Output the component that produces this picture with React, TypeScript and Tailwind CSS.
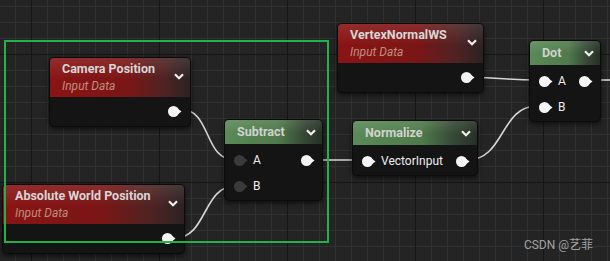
import React from "react";

type PinRow = { input?: string; dark?: boolean; output?: boolean };

const Pin = ({ dark = false }: { dark?: boolean }) => (
  <svg width="14" height="11" viewBox="0 0 14 11" className="shrink-0">
    <circle cx="5.5" cy="5.5" r="5.5" fill={dark ? "#3a3a3a" : "#f4f4f4"} />
    <polygon points="10,2.8 13.5,5.5 10,8.2" fill={dark ? "#3a3a3a" : "#f4f4f4"} />
  </svg>
);

const Chevron = () => (
  <svg width="10" height="7" viewBox="0 0 10 7" className="shrink-0">
    <polyline points="1,1.2 5,5.2 9,1.2" fill="none" stroke="#ececec" strokeWidth="2.2" />
  </svg>
);

const InputNode = ({ pos, title }: { pos: string; title: string }) => (
  <div className={`absolute ${pos} rounded-[5px] border border-[#0b0b0b] bg-[#141414] shadow-[0_2px_5px_rgba(0,0,0,0.6)] overflow-hidden`}>
    <div className="h-[39px] flex justify-between items-start bg-[linear-gradient(180deg,rgba(255,255,255,0.1),rgba(255,255,255,0)_55%),linear-gradient(90deg,#8a1414,#7a1616_55%,#4e2323_82%,#2c2222)]">
      <div className="pl-[12px] pt-[3px]">
        <div className="text-[12.5px] leading-[16px] font-bold text-[#d8d6d6] whitespace-nowrap">{title}</div>
        <div className="mt-[1px] text-[12px] leading-[16px] italic text-[#c08e7e]">Input Data</div>
      </div>
      <div className="pt-[15px] pr-[6px]">
        <Chevron />
      </div>
    </div>
    <div className="h-[29px] flex items-center justify-end pr-[8px]">
      <Pin />
    </div>
  </div>
);

const OpNode = ({ pos, title, rows }: { pos: string; title: string; rows: PinRow[] }) => (
  <div className={`absolute ${pos} rounded-[5px] border border-[#0b0b0b] bg-[#141414] shadow-[0_2px_5px_rgba(0,0,0,0.6)] overflow-hidden`}>
    <div className="h-[24px] flex justify-between items-center bg-[linear-gradient(180deg,rgba(255,255,255,0.1),rgba(255,255,255,0)_55%),linear-gradient(90deg,#5b8957,#4f7a4b_55%,#374a36_80%,#263026)]">
      <div className="pl-[12px] text-[12.5px] leading-[16px] font-bold text-[#cfd3cf] whitespace-nowrap">{title}</div>
      <div className="pr-[6px]">
        <Chevron />
      </div>
    </div>
    <div className="pt-[3px] pb-[1px]">
      {rows.map((row, i) => (
        <div key={i} className="h-[26px] flex items-center">
          {row.input !== undefined && (
            <div className="flex items-center pl-[9px]">
              <Pin dark={row.dark} />
              <span className="ml-[5px] text-[12px] text-[#ededed] whitespace-nowrap">{row.input}</span>
            </div>
          )}
          <div className="flex-1" />
          {row.output && (
            <div className="pr-[7px] flex items-center">
              <Pin />
            </div>
          )}
        </div>
      ))}
    </div>
  </div>
);

export default function App() {
  return (
    <div className="relative w-[610px] h-[261px] overflow-hidden bg-[#242424] font-[Roboto,sans-serif]">
      {/* grid and wires */}
      <svg className="absolute inset-0" width="610" height="261">
        <defs>
          <pattern id="minor" patternUnits="userSpaceOnUse" x="15" y="6" width="16" height="16">
            <rect x="0" y="0" width="1" height="16" fill="#313131" />
            <rect x="0" y="0" width="16" height="1" fill="#313131" />
          </pattern>
          <pattern id="major" patternUnits="userSpaceOnUse" x="31" y="54" width="128" height="128">
            <rect x="0" y="0" width="1" height="128" fill="#151515" />
            <rect x="0" y="0" width="128" height="1" fill="#151515" />
          </pattern>
        </defs>
        <rect width="610" height="261" fill="url(#minor)" />
        <rect width="610" height="261" fill="url(#major)" />
        <g fill="none" stroke="#d4d4d4" strokeWidth="1.6">
          <path d="M180,109 C212,109 203,160 235,160" />
          <path d="M175,238 C207,238 203,186 235,186" />
          <path d="M311,160 L362,160" />
          <path d="M467,160 C505,160 500,106 537,106" />
          <path d="M471,77.5 C500,77.5 508,80 537,80" />
          <path d="M587,80 L610,80" />
        </g>
      </svg>

      <InputNode pos="left-[49px] top-[57px] w-[142px]" title="Camera Position" />
      <InputNode pos="left-[2px] top-[184px] w-[183px]" title="Absolute World Position" />
      <InputNode pos="left-[337px] top-[23px] w-[147px]" title="VertexNormalWS" />

      <OpNode
        pos="left-[224px] top-[119px] w-[99px]"
        title="Subtract"
        rows={[
          { input: "A", dark: true, output: true },
          { input: "B", dark: true },
        ]}
      />
      <OpNode pos="left-[352px] top-[120px] w-[126px]" title="Normalize" rows={[{ input: "VectorInput", output: true }]} />
      <OpNode
        pos="left-[529px] top-[40px] w-[72px]"
        title="Dot"
        rows={[{ input: "A", output: true }, { input: "B" }]}
      />

      {/* selection box */}
      <div className="absolute left-[4px] top-[40px] w-[325px] h-[203px] border-2 border-[#24b04b] pointer-events-none" />

      <div className="absolute right-[17px] bottom-[8px] text-[12px] leading-[16px] text-[#a2a2a2] font-[Roboto,'Noto_Sans_CJK_SC',sans-serif]">
        CSDN @艺菲
      </div>
    </div>
  );
}
